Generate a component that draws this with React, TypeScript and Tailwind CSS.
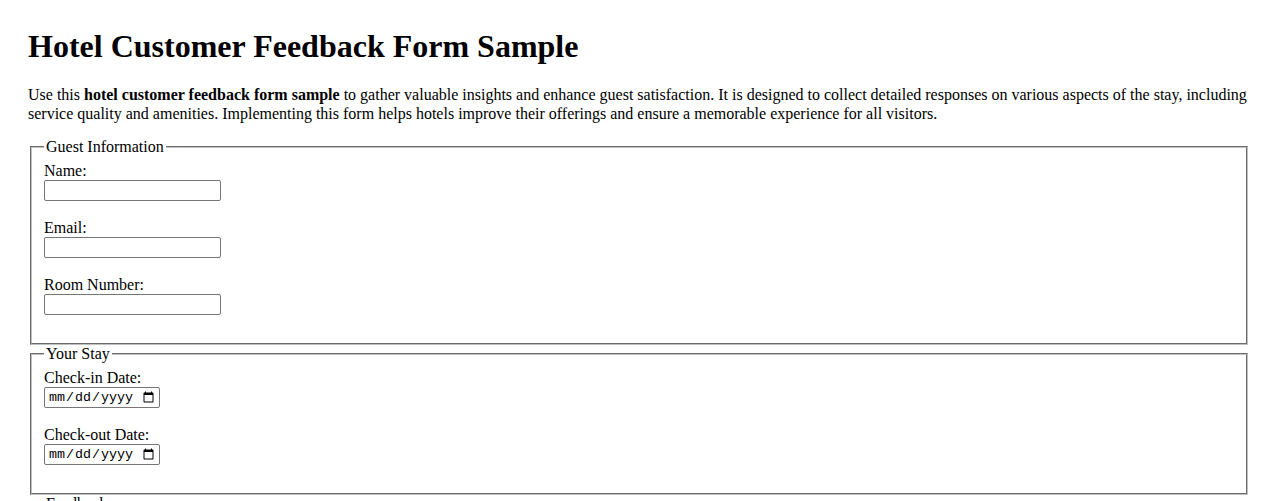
import React from 'react';

const fieldsetCls =
  'mx-[2px] border-2 [border-style:groove] border-[#c0c0c0] px-3 pt-[5.6px] pb-[10px] min-w-0';
const legendCls = 'px-[2px] leading-[18.4px]';
const textInputCls =
  'block h-[21px] w-[177px] border border-[#767676] rounded-[2px] bg-white px-[2px] py-[1px] text-[13.33px] [font-family:Arial,"Liberation_Sans",sans-serif]';
const dateInputCls =
  'block h-[21px] w-[116px] border border-[#767676] rounded-[2px] bg-white pl-[3px] pr-[2px] text-[13.33px] [font-family:"Liberation_Mono","DejaVu_Sans_Mono",monospace]';

function Field({ label, id, type = 'text' }: { label: string; id: string; type?: string }) {
  return (
    <div className="mb-[17.6px]">
      <label htmlFor={id} className="block leading-[18.4px]">
        {label}
      </label>
      <input id={id} name={id} type={type} className={type === 'date' ? dateInputCls : textInputCls} />
    </div>
  );
}

export default function App() {
  return (
    <div className="bg-white p-[28px] text-black text-[16px] [font-family:'Liberation_Serif','Times_New_Roman',serif]">
      <h1 className="text-[32px] font-bold leading-[36.8px] mb-[21.44px]">Hotel Customer Feedback Form Sample</h1>
      <p className="leading-[18.4px] mb-[15px]">
        Use this <strong>hotel customer feedback form sample</strong> to gather valuable insights and enhance guest
        satisfaction. It is designed to collect detailed responses on various aspects of the stay, including service
        quality and amenities. Implementing this form helps hotels improve their offerings and ensure a memorable
        experience for all visitors.
      </p>

      <form>
        <fieldset className={fieldsetCls}>
          <legend className={legendCls}>Guest Information</legend>
          <Field label="Name:" id="name" />
          <Field label="Email:" id="email" type="email" />
          <Field label="Room Number:" id="room" />
        </fieldset>

        <fieldset className={fieldsetCls}>
          <legend className={legendCls}>Your Stay</legend>
          <Field label="Check-in Date:" id="checkin" type="date" />
          <Field label="Check-out Date:" id="checkout" type="date" />
        </fieldset>

        <fieldset className={fieldsetCls}>
          <legend className={legendCls}>Feedback</legend>
          <Field label="Overall Rating (1-5):" id="rating" type="number" />
          <Field label="Comments:" id="comments" />
        </fieldset>
      </form>
    </div>
  );
}
